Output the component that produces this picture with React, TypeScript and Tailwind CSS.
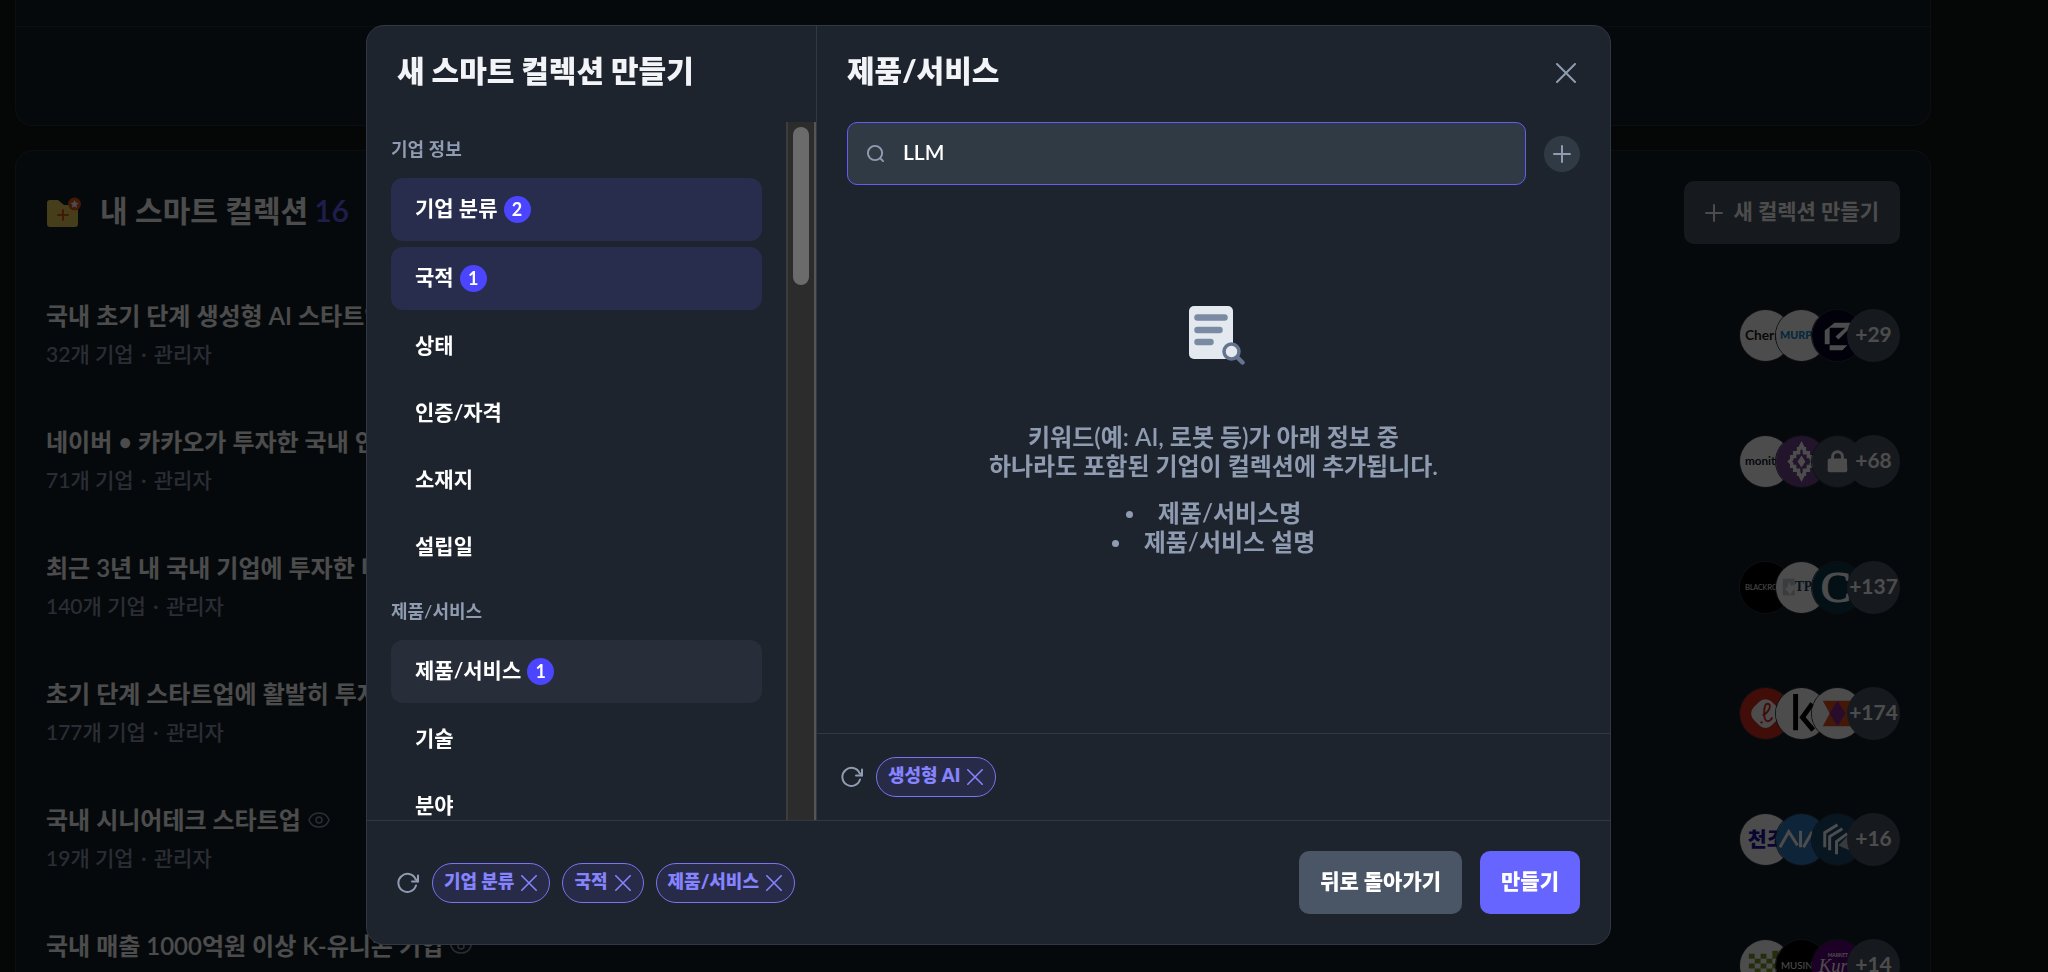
import { useState } from "react";
import type { ReactNode } from "react";
import { Eye } from "lucide-react";

const categories = [
  {
    title: "기업 정보",
    items: [
      { label: "기업 분류", count: 2 },
      { label: "국적", count: 1 },
      { label: "상태", count: 0 },
      { label: "인증/자격", count: 0 },
      { label: "소재지", count: 0 },
      { label: "설립일", count: 0 },
    ],
  },
  {
    title: "제품/서비스",
    items: [
      { label: "제품/서비스", count: 1 },
      { label: "기술", count: 0 },
      { label: "분야", count: 0 },
    ],
  },
];

function Logo({ bg, children }: { bg: string; children: ReactNode }) {
  return (
    <svg viewBox="0 0 52 52" className="w-full h-full">
      <rect width="52" height="52" fill={bg} />
      {children}
    </svg>
  );
}

const collections = [
  {
    title: "국내 초기 단계 생성형 AI 스타트업",
    count: 32,
    shared: false,
    more: 29,
    logos: [
      <Logo bg="#ffffff">
        <text x="5" y="31" fontSize="14" fontWeight="700" fill="#1c1c20">Cherr</text>
      </Logo>,
      <Logo bg="#ffffff">
        <text x="4" y="30" fontSize="11" fontWeight="900" fill="#0f86c8">MURP</text>
      </Logo>,
      <Logo bg="#000425">
        <path d="M13 21l5-4v18h-5zM18 17l5-4h18l-2 5L27 30l-3-3 10-9H18zM18 36h18l-5 5H18z" fill="#fff" />
      </Logo>,
    ],
  },
  {
    title: "네이버 • 카카오가 투자한 국내 인공지능",
    count: 71,
    shared: false,
    more: 68,
    logos: [
      <Logo bg="#ffffff">
        <text x="5" y="30" fontSize="12" fontWeight="700" fill="#182036">monit</text>
      </Logo>,
      <Logo bg="#71458f">
        <path
          d="M26 9l2 4h1v4h4v4h3v3l2 2-2 2v3h-3v4h-4v4h-1l-2 4-2-4h-1v-4h-4v-4h-3v-3l-2-2 2-2v-3h3v-4h4v-4h1z"
          fill="none"
          stroke="#fff"
          strokeWidth="3.500"
        />
        <path d="M26 20l4 6-4 6-4-6z" fill="#fff" />
      </Logo>,
      <Logo bg="#4a5565">
        <rect x="16" y="23" width="20" height="14" rx="2" fill="#fff" />
        <path d="M21 24v-3a5 5 0 0 1 10 0v3" fill="none" stroke="#fff" strokeWidth="3" />
      </Logo>,
    ],
  },
  {
    title: "최근 3년 내 국내 기업에 투자한 미국 기관",
    count: 140,
    shared: false,
    more: 137,
    logos: [
      <Logo bg="#000000">
        <text x="5" y="29" fontSize="8" fill="#fff">
          B<tspan fontSize="7">LACK</tspan>R<tspan fontSize="7">O</tspan>
        </text>
      </Logo>,
      <Logo bg="#ffffff">
        <rect x="7" y="17" width="12" height="17" fill="#c5c9cf" />
        <path d="M13 20l2 4h4v4l-3 2-1 4-3-4-3-2 3-3z" fill="#fff" />
        <text x="19" y="30" fontSize="14" fontWeight="700" fontFamily="Liberation Serif, serif" fill="#1f3a5f">TP</text>
      </Logo>,
      <Logo bg="#0d3b4f">
        <text x="9" y="41" fontSize="46" fontFamily="Liberation Serif, serif" stroke="#fff" fill="#fff">C</text>
      </Logo>,
    ],
  },
  {
    title: "초기 단계 스타트업에 활발히 투자한 기관",
    count: 177,
    shared: false,
    more: 174,
    logos: [
      <Logo bg="#d92d20">
        <rect x="13" y="13" width="26" height="26" rx="9" transform="rotate(45 26 26)" fill="#fff" />
        <path d="M23 28c7-3 10-12 5-12-4 0-5 17 0 18 3 0 4-2 5-4" fill="none" stroke="#d92d20" strokeWidth="2" />
        <circle cx="22" cy="35" r="1.2" fill="#d92d20" />
      </Logo>,
      <Logo bg="#ffffff">
        <path d="M20 6v37M37 16L27 30l11 13" fill="none" stroke="#000" strokeWidth="5" />
      </Logo>,
      <Logo bg="#ffffff">
        <path d="M11 13h32l-7 13 7 13H11l7-13z" fill="#e4501b" />
        <path d="M26 13l8 13-8 13-8-13z" fill="#8a2a91" />
      </Logo>,
    ],
  },
  {
    title: "국내 시니어테크 스타트업",
    count: 19,
    shared: true,
    more: 16,
    logos: [
      <Logo bg="#ffffff">
        <text x="8" y="34" fontSize="21" fontWeight="900" fill="#1d12a8">천조</text>
      </Logo>,
      <Logo bg="#2f78c0">
        <path d="M4 34l9-16 9 14M25 17v17M28 34l9-16" fill="none" stroke="#fff" strokeWidth="3" />
      </Logo>,
      <Logo bg="#1d4b70">
        <path d="M13 34V19l13-8M18 37V23l13-8M25 41V28l11-8" fill="none" stroke="#fff" strokeWidth="3" />
        <path d="M27 32l11-11v16z" fill="#fff" opacity="0.7" />
      </Logo>,
    ],
  },
  {
    title: "국내 매출 1000억원 이상 K-유니콘 기업",
    count: 17,
    shared: true,
    more: 14,
    logos: [
      <Logo bg="#ffffff">
        <path
          d="M9 14h6v5H9zM21 14h6v5h-6zM33 11h6v8h-6zM15 19h6v5h-6zM27 19h6v5h-6zM9 24h6v5H9zM21 24h6v5h-6zM33 24h6v5h-6zM15 29h6v5h-6zM27 29h6v5h-6z"
          fill="#7a9c2a"
        />
      </Logo>,
      <Logo bg="#000000">
        <text x="5" y="30" fontSize="10" fill="#fff">MUSIN</text>
      </Logo>,
      <Logo bg="#5f0080">
        <text x="16" y="17" fontSize="5" fontWeight="700" fill="#fff">MARKET</text>
        <text x="7" y="33" fontSize="19" fontStyle="italic" fontFamily="Liberation Serif, serif" fill="#fff">Kur</text>
      </Logo>,
    ],
  },
];

function CloseIcon({ className }: { className?: string }) {
  return (
    <svg viewBox="0 0 20 20" fill="none" stroke="currentColor" strokeLinecap="round" className={className}>
      <path d="M1 1l18 18M19 1L1 19" strokeWidth="2" />
    </svg>
  );
}

function PlusIcon({ className }: { className?: string }) {
  return (
    <svg viewBox="0 0 18 18" fill="none" stroke="currentColor" strokeLinecap="round" className={className}>
      <path d="M9 1v16M1 9h16" strokeWidth="2" />
    </svg>
  );
}

function ResetButton() {
  return (
    <button type="button" aria-label="초기화" className="text-[#8e9bb0]">
      <svg viewBox="0 0 22 22" fill="none" stroke="currentColor" strokeLinecap="round" strokeLinejoin="round" strokeWidth="2" className="w-[22px] h-[22px]">
        <path d="M19 13.500A9 9 0 1 1 18.500 7L21 9.500" />
        <path d="M21 3.500v6h-6" />
      </svg>
    </button>
  );
}

function Chip({ label }: { label: string }) {
  return (
    <span className="flex items-center gap-[7px] h-10 pl-[11px] pr-3 rounded-full border border-[#7775f0] bg-[#282b48] text-[#8583ff] text-[18px] leading-6 font-extrabold whitespace-nowrap">
      <span className="pb-1">{label}</span>
      <button type="button" aria-label={`${label} 삭제`}>
        <CloseIcon className="w-4 h-4" />
      </button>
    </span>
  );
}

function CollectionPage() {
  return (
    <main className="h-screen overflow-hidden pl-[15px] pr-[117px] flex flex-col gap-6">
      <section className="shrink-0 h-[126px] rounded-b-[18px] border border-t-0 border-[#2b333d] bg-[#14212a]">
        <div className="h-[27px] border-b border-[#2b333d]"></div>
      </section>

      <section className="shrink-0 rounded-[18px] border border-[#2b333d] bg-[#14212a] px-[30px] pt-[30px]">
        <div className="flex items-center justify-between mb-7">
          <h2 className="flex items-center text-[30px] leading-10 font-semibold text-white">
            <svg viewBox="0 0 36 32" className="w-9 h-8 mr-[18px]">
              <path d="M1 6a3 3 0 0 1 3-3h8l6 5h11a3 3 0 0 1 3 3v16a3 3 0 0 1-3 3H4a3 3 0 0 1-3-3z" fill="#eccb5d" />
              <path d="M17 13v10M12 18h10" stroke="#e2561d" strokeWidth="2" strokeLinecap="round" />
              <circle cx="28.500" cy="7" r="6.500" fill="#e2561d" />
              <path d="M28.500 3l1.200 2.600 2.800.4-2 2 .5 2.800-2.500-1.400-2.500 1.400.5-2.800-2-2 2.800-.4z" fill="#fff" />
            </svg>
            <span className="pb-[6px]">내 스마트 컬렉션</span>
            <span className="ml-[6px] pb-[6px] text-[#6b63ff]">16</span>
          </h2>
          <button type="button" className="flex items-center gap-[11px] h-[63px] px-[21px] rounded-[10px] bg-[#4a5565] text-white text-[21px] leading-7 font-bold">
            <PlusIcon className="w-[18px] h-[18px]" />
            <span className="pb-1">새 컬렉션 만들기</span>
          </button>
        </div>

        <ul>
          {collections.map((item) => (
            <li key={item.title} className="flex items-center justify-between h-[126px]">
              <div>
                <a href="#" className="flex items-center gap-[6px] text-[24px] leading-9 font-semibold text-white">
                  {item.title}
                  {item.shared && <Eye className="w-6 h-6 text-[#8e9bb0]" strokeWidth={1.5} />}
                </a>
                <p className="mt-[2px] text-[21px] leading-9 font-medium text-[#8e9bb0]">
                  {item.count}개 기업<span className="mx-[2px]"> · </span>관리자
                </p>
              </div>
              <div className="flex">
                {item.logos.map((logo, i) => (
                  <span key={i} className="w-[53px] h-[53px] -mr-[17px] rounded-full overflow-hidden border border-[#2b333d]">
                    {logo}
                  </span>
                ))}
                <span className="w-[53px] h-[53px] pb-[2px] z-10 rounded-full bg-[#4a5565] flex items-center justify-center text-[21px] font-bold text-white">
                  +{item.more}
                </span>
              </div>
            </li>
          ))}
        </ul>
      </section>
    </main>
  );
}

function Sidebar() {
  const [selected, setSelected] = useState("제품/서비스");

  const tone = (label: string, count: number) => {
    if (label === selected) return "bg-[#272e39]";
    return count > 0 ? "bg-[#282d4e]" : "";
  };

  return (
    <div className="w-[450px] shrink-0 flex flex-col border-r border-[#303845]">
      <h2 className="h-24 px-[30px] pt-6 text-[30px] leading-10 font-extrabold text-[#f3f4f8]">새 스마트 컬렉션 만들기</h2>
      <div className="flex-1 min-h-0 flex">
        <nav className="flex-1 min-w-0 overflow-hidden pl-6 pr-6">
          {categories.map((group) => (
            <div key={group.title} className="mb-[6px]">
              <h3 className="h-14 pb-[3px] flex items-center text-[18px] leading-6 font-semibold text-[#8e9bb0]">{group.title}</h3>
              <ul className="flex flex-col gap-[6px]">
                {group.items.map((item) => (
                  <li key={item.label}>
                    <button
                      type="button"
                      onClick={() => setSelected(item.label)}
                      className={`w-full flex items-center gap-[6px] px-6 py-[18px] rounded-[12px] text-[21px] font-semibold text-white ${tone(item.label, item.count)}`}
                    >
                      <span className="leading-[21px] pb-1">{item.label}</span>
                      {item.count > 0 && (
                        <span className="w-[27px] h-[27px] pb-[2px] rounded-full bg-[#4b45ff] flex items-center justify-center text-[18px] leading-6 font-bold">
                          {item.count}
                        </span>
                      )}
                    </button>
                  </li>
                ))}
              </ul>
            </div>
          ))}
        </nav>
        {/* Scrollbar */}
        <div className="w-[30px] pt-[5px] flex justify-center bg-[#2c2c2c] border-x-2 border-l-[#3d3d3d] border-r-[#555555]">
          <div className="w-4 h-[158px] rounded-full bg-[#6b6b6b]"></div>
        </div>
      </div>
    </div>
  );
}

function EmptyState() {
  return (
    <div className="flex-1 flex flex-col items-center pt-[119px] text-[24px] leading-[29px] font-semibold text-[#8e9bb0] text-center">
      <svg viewBox="0 0 62 62" className="w-[62px] h-[62px] mb-14">
        <rect x="6" y="2" width="44" height="53" rx="5" fill="#e4e8ef" />
        <path d="M14.500 13.500h27M14.500 26h22M14.500 38h13" stroke="#7a8aa3" strokeWidth="6.500" strokeLinecap="round" />
        <path d="M55 54l4.500 4.500" stroke="#64748f" strokeWidth="4.500" strokeLinecap="round" />
        <circle cx="48.500" cy="47.500" r="7.500" fill="#e4e8ef" stroke="#64748f" strokeWidth="3.500" />
      </svg>
      <p>
        키워드(예: AI, 로봇 등)가 아래 정보 중
        <br />
        하나라도 포함된 기업이 컬렉션에 추가됩니다.
      </p>
      <ul className="mt-[18px]">
        {["제품/서비스명", "제품/서비스 설명"].map((text) => (
          <li key={text} className="flex items-center justify-center gap-[25px]">
            <span className="w-[7px] h-[7px] mt-1 rounded-full bg-[#8e9bb0]"></span>
            {text}
          </li>
        ))}
      </ul>
    </div>
  );
}

function KeywordPanel() {
  const [keyword, setKeyword] = useState("LLM");

  return (
    <div className="flex-1 min-w-0 flex flex-col">
      <div className="h-24 px-[30px] flex items-start justify-between">
        <h2 className="pt-6 text-[30px] leading-10 font-extrabold text-[#f3f4f8]">제품/서비스</h2>
        <button type="button" aria-label="닫기" className="mt-[37px] mr-1 text-[#8e9bb0]">
          <CloseIcon className="w-5 h-5" />
        </button>
      </div>

      <div className="px-[30px] flex items-center gap-[18px]">
        <label className="flex-1 flex items-center gap-[18px] h-[63px] px-[18px] rounded-[10px] border border-[#635cf5] bg-[#303a45]">
          <svg viewBox="0 0 20 20" fill="none" stroke="#8e9bb0" strokeWidth="2" strokeLinecap="round" className="w-[19px] h-[19px]">
            <circle cx="9.500" cy="9.500" r="7.500" />
            <path d="M15 15l3 3" />
          </svg>
          <input
            type="text"
            aria-label="키워드 검색"
            value={keyword}
            onChange={(e) => setKeyword(e.target.value)}
            className="flex-1 min-w-0 pb-1 text-[21px] leading-7 font-semibold text-white bg-transparent outline-none"
          />
        </label>
        <button type="button" aria-label="키워드 추가" className="w-9 h-9 rounded-full bg-[#303a45] flex items-center justify-center text-[#8e9bb0]">
          <PlusIcon className="w-[18px] h-[18px]" />
        </button>
      </div>

      <EmptyState />

      <div className="h-[87px] px-6 flex items-center gap-[13px] border-t border-[#303845]">
        <ResetButton />
        <Chip label="생성형 AI" />
      </div>
    </div>
  );
}

function CollectionDialog() {
  return (
    <div className="fixed inset-0 z-20 pr-[71px] flex items-start justify-center pt-[25px] bg-black/70">
      <div role="dialog" aria-label="새 스마트 컬렉션 만들기" className="w-full max-w-[1245px] h-[calc(100vh-52px)] flex flex-col rounded-[18px] border border-[#303845] bg-[#1e242d] overflow-hidden">
        <div className="flex-1 min-h-0 flex">
          <Sidebar />
          <KeywordPanel />
        </div>

        <div className="px-[30px] py-[30px] flex items-center justify-between border-t border-[#303845]">
          <div className="flex items-center gap-[13px]">
            <ResetButton />
            <div className="flex gap-3">
              <Chip label="기업 분류" />
              <Chip label="국적" />
              <Chip label="제품/서비스" />
            </div>
          </div>
          <div className="flex gap-[18px] text-[21px] leading-7 font-extrabold text-white">
            <button type="button" className="h-[63px] px-[21px] pb-1 rounded-[10px] bg-[#4a5565]">뒤로 돌아가기</button>
            <button type="button" className="h-[63px] px-[21px] pb-1 rounded-[10px] bg-[#6765ff]">만들기</button>
          </div>
        </div>
      </div>
    </div>
  );
}

export default function App() {
  return (
    <div className="bg-[#111417] font-[Lato,'Noto_Sans_CJK_KR',sans-serif]">
      <CollectionPage />
      <CollectionDialog />
    </div>
  );
}
